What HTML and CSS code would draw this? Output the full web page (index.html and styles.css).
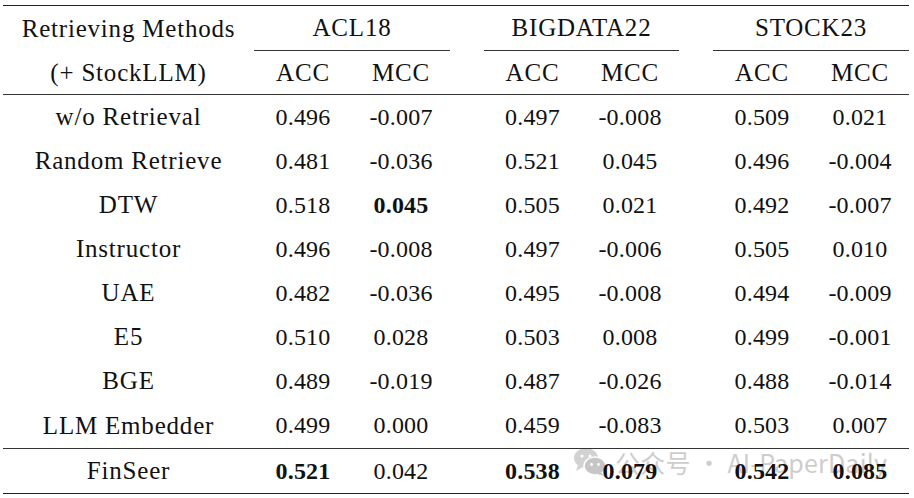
FILE: index.html
```html
<!DOCTYPE html>
<html>
<head>
<meta charset="utf-8">
<link rel="stylesheet" href="styles.css">
</head>
<body>
<div class="table">
  <div class="row head1">
    <div class="cell">Retrieving Methods</div>
    <div class="cell group">ACL18</div>
    <div class="cell spacer"></div>
    <div class="cell group">BIGDATA22</div>
    <div class="cell spacer"></div>
    <div class="cell group">STOCK23</div>
  </div>
  <div class="row head2">
    <div class="cell">(+ StockLLM)</div>
    <div class="cell">ACC</div><div class="cell">MCC</div>
    <div class="cell"></div>
    <div class="cell">ACC</div><div class="cell">MCC</div>
    <div class="cell"></div>
    <div class="cell">ACC</div><div class="cell">MCC</div>
  </div>
  <div class="row body">
    <div class="cell">w/o Retrieval</div>
    <div class="cell">0.496</div><div class="cell">-0.007</div><div class="cell"></div>
    <div class="cell">0.497</div><div class="cell">-0.008</div><div class="cell"></div>
    <div class="cell">0.509</div><div class="cell">0.021</div>
  </div>
  <div class="row body">
    <div class="cell">Random Retrieve</div>
    <div class="cell">0.481</div><div class="cell">-0.036</div><div class="cell"></div>
    <div class="cell">0.521</div><div class="cell">0.045</div><div class="cell"></div>
    <div class="cell">0.496</div><div class="cell">-0.004</div>
  </div>
  <div class="row body">
    <div class="cell">DTW</div>
    <div class="cell">0.518</div><div class="cell b">0.045</div><div class="cell"></div>
    <div class="cell">0.505</div><div class="cell">0.021</div><div class="cell"></div>
    <div class="cell">0.492</div><div class="cell">-0.007</div>
  </div>
  <div class="row body">
    <div class="cell">Instructor</div>
    <div class="cell">0.496</div><div class="cell">-0.008</div><div class="cell"></div>
    <div class="cell">0.497</div><div class="cell">-0.006</div><div class="cell"></div>
    <div class="cell">0.505</div><div class="cell">0.010</div>
  </div>
  <div class="row body">
    <div class="cell">UAE</div>
    <div class="cell">0.482</div><div class="cell">-0.036</div><div class="cell"></div>
    <div class="cell">0.495</div><div class="cell">-0.008</div><div class="cell"></div>
    <div class="cell">0.494</div><div class="cell">-0.009</div>
  </div>
  <div class="row body">
    <div class="cell">E5</div>
    <div class="cell">0.510</div><div class="cell">0.028</div><div class="cell"></div>
    <div class="cell">0.503</div><div class="cell">0.008</div><div class="cell"></div>
    <div class="cell">0.499</div><div class="cell">-0.001</div>
  </div>
  <div class="row body">
    <div class="cell">BGE</div>
    <div class="cell">0.489</div><div class="cell">-0.019</div><div class="cell"></div>
    <div class="cell">0.487</div><div class="cell">-0.026</div><div class="cell"></div>
    <div class="cell">0.488</div><div class="cell">-0.014</div>
  </div>
  <div class="row body last">
    <div class="cell">LLM Embedder</div>
    <div class="cell">0.499</div><div class="cell">0.000</div><div class="cell"></div>
    <div class="cell">0.459</div><div class="cell">-0.083</div><div class="cell"></div>
    <div class="cell">0.503</div><div class="cell">0.007</div>
  </div>
  <div class="row final">
    <div class="cell">FinSeer</div>
    <div class="cell b">0.521</div><div class="cell">0.042</div><div class="cell"></div>
    <div class="cell b">0.538</div><div class="cell b">0.079</div><div class="cell"></div>
    <div class="cell b">0.542</div><div class="cell b">0.085</div>
  </div>
  <div class="watermark">
    <svg class="wm-icon" width="34" height="30" viewBox="0 0 34 30">
      <ellipse cx="13" cy="11" rx="12" ry="10" fill="#c4c4c4"/>
      <path d="M5 18 L3 24 L10 20 Z" fill="#c4c4c4"/>
      <ellipse cx="22" cy="19" rx="11" ry="9" fill="#b4b4b4" stroke="#fff" stroke-width="1.5"/>
      <path d="M28 25 L31 29 L24 27 Z" fill="#b4b4b4"/>
      <circle cx="9" cy="9" r="1.6" fill="#fff"/>
      <circle cx="17" cy="9" r="1.6" fill="#fff"/>
      <circle cx="18.5" cy="17.5" r="1.4" fill="#fff"/>
      <circle cx="25.5" cy="17.5" r="1.4" fill="#fff"/>
    </svg>
    <span class="wm-text">公众号 · AI-PaperDaily</span>
  </div>
</div>
</body>
</html>
```

FILE: styles.css
```css
html, body {
  margin: 0;
  padding: 0;
  background: #fff;
}
body {
  width: 914px;
  height: 498px;
  overflow: hidden;
}
.table {
  position: relative;
  margin: 5px 0 0 3px;
  width: 906px;
  border-top: 1.5px solid #222;
  border-bottom: 1.5px solid #222;
  font-family: "Liberation Serif", "Times New Roman", serif;
  font-size: 24px;
  color: #111;
}
.row {
  display: grid;
  grid-template-columns: 251px 98px 98px 34px 97px 98px 34px 98px 98px;
  align-items: stretch;
  position: relative;
  z-index: 1;
}
.cell {
  display: flex;
  align-items: center;
  justify-content: center;
  white-space: nowrap;
  letter-spacing: 0.2px;
}
.head1 .cell,
.head2 .cell,
.row .cell:first-child {
  font-size: 25px;
  letter-spacing: 0.8px;
}
.head1 {
  height: 45px;
  grid-template-columns: 251px 196px 34px 195px 34px 196px;
}
.head1 .group {
  border-bottom: 1px solid #333;
}
.head2 {
  height: 43px;
  border-bottom: 1px solid #333;
}
.body {
  height: 44px;
}
.body.last {
  height: 45px;
  border-bottom: 1px solid #333;
}
.final {
  height: 44px;
}
.b {
  font-weight: 700;
}
.watermark {
  position: absolute;
  left: 570px;
  top: 438px;
  z-index: 0;
  display: flex;
  align-items: center;
  gap: 8px;
  opacity: 0.75;
  pointer-events: none;
}
.wm-text {
  font-family: "Noto Sans CJK SC", "Noto Sans", sans-serif;
  font-size: 25px;
  color: #bdbdbd;
  letter-spacing: 0.2px;
}
```
